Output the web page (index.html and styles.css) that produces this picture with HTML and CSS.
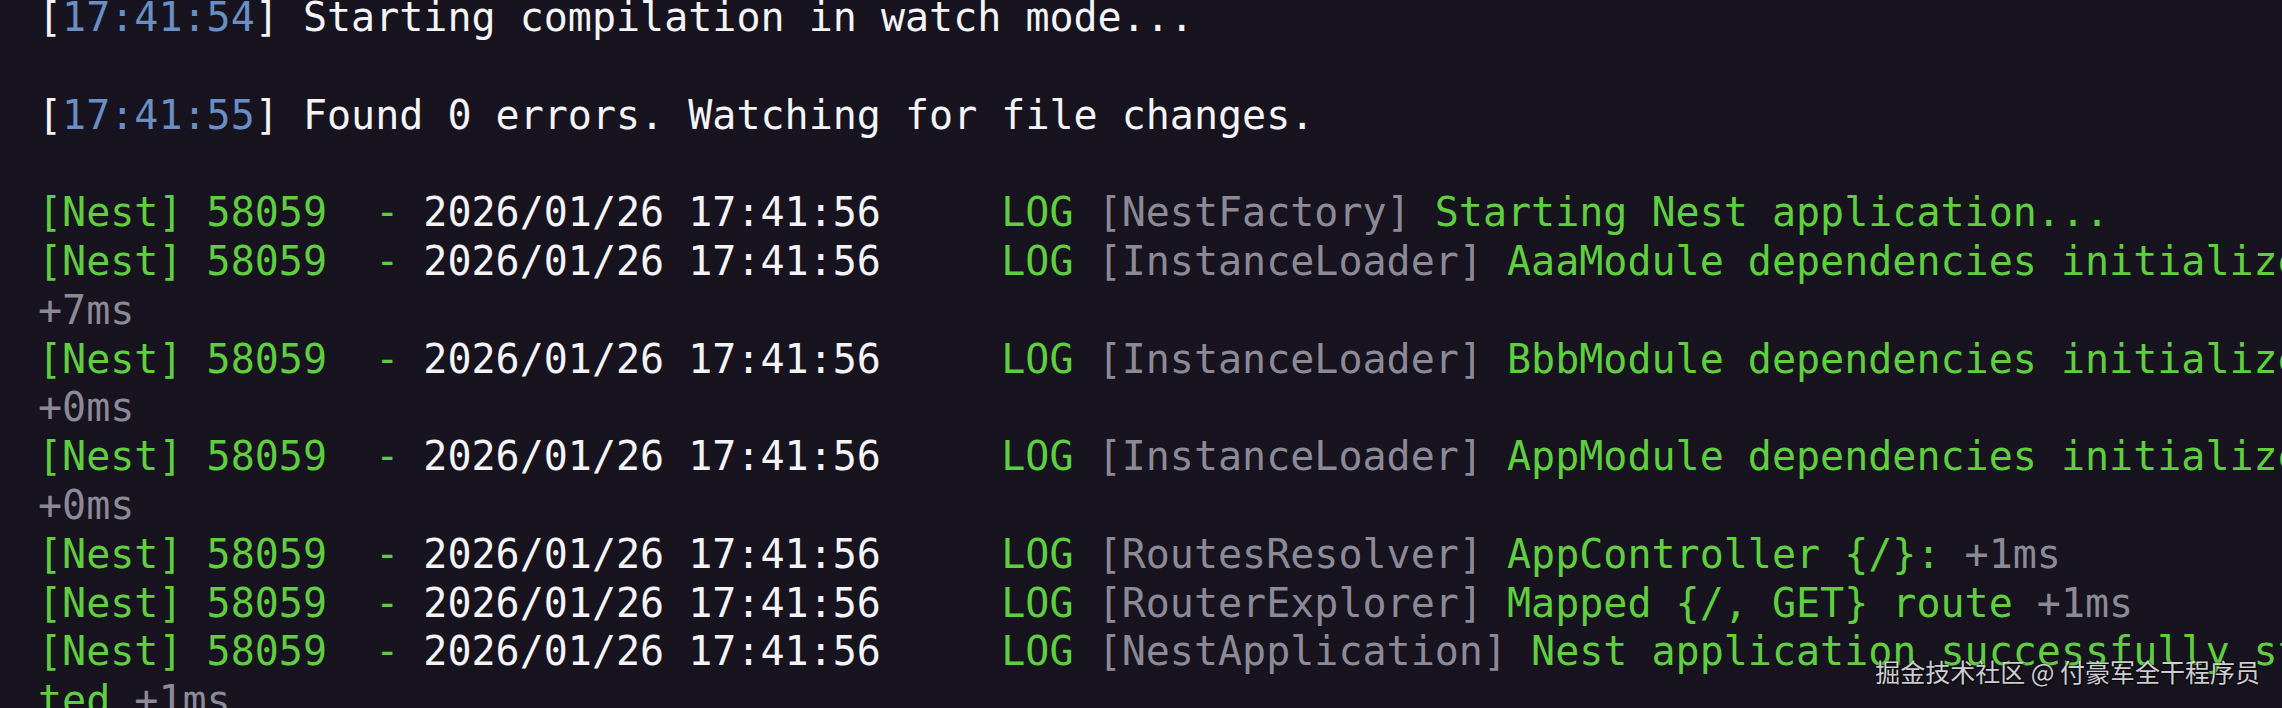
FILE: index.html
```html
<!DOCTYPE html>
<html lang="zh-CN">
<head>
<meta charset="utf-8">
<title>Nest watch mode</title>
<link rel="stylesheet" href="styles.css">
</head>
<body>
<main class="terminal">
<div class="line"><span class="w">[</span><span class="ts">17:41:54</span><span class="w">] Starting compilation in watch mode...</span></div>
<div class="line"> </div>
<div class="line"><span class="w">[</span><span class="ts">17:41:55</span><span class="w">] Found 0 errors. Watching for file changes.</span></div>
<div class="line"> </div>
<div class="line"><span class="g">[Nest] 58059  - </span><span class="w">2026/01/26 17:41:56</span><span class="g">     LOG </span><span class="m">[NestFactory]</span><span class="g"> Starting Nest application...</span></div>
<div class="line"><span class="g">[Nest] 58059  - </span><span class="w">2026/01/26 17:41:56</span><span class="g">     LOG </span><span class="m">[InstanceLoader]</span><span class="g"> AaaModule dependencies initialized</span></div>
<div class="line"><span class="m">+7ms</span></div>
<div class="line"><span class="g">[Nest] 58059  - </span><span class="w">2026/01/26 17:41:56</span><span class="g">     LOG </span><span class="m">[InstanceLoader]</span><span class="g"> BbbModule dependencies initialized</span></div>
<div class="line"><span class="m">+0ms</span></div>
<div class="line"><span class="g">[Nest] 58059  - </span><span class="w">2026/01/26 17:41:56</span><span class="g">     LOG </span><span class="m">[InstanceLoader]</span><span class="g"> AppModule dependencies initialized</span></div>
<div class="line"><span class="m">+0ms</span></div>
<div class="line"><span class="g">[Nest] 58059  - </span><span class="w">2026/01/26 17:41:56</span><span class="g">     LOG </span><span class="m">[RoutesResolver]</span><span class="g"> AppController {/}:</span><span class="m"> +1ms</span></div>
<div class="line"><span class="g">[Nest] 58059  - </span><span class="w">2026/01/26 17:41:56</span><span class="g">     LOG </span><span class="m">[RouterExplorer]</span><span class="g"> Mapped {/, GET} route</span><span class="m"> +1ms</span></div>
<div class="line"><span class="g">[Nest] 58059  - </span><span class="w">2026/01/26 17:41:56</span><span class="g">     LOG </span><span class="m">[NestApplication]</span><span class="g"> Nest application successfully star</span></div>
<div class="line"><span class="g">ted</span><span class="m"> +1ms</span></div>
</main>
<div class="watermark">掘金技术社区 @ 付豪军全干程序员</div>
</body>
</html>
```

FILE: styles.css
```css
html, body {
  margin: 0;
  padding: 0;
  width: 2282px;
  height: 708px;
  overflow: hidden;
  background: #17141f;
}

.terminal {
  margin-top: -7px;
  padding-left: 38px;
  font-family: "DejaVu Sans Mono", "Liberation Mono", monospace;
  font-size: 40px;
  line-height: 48.8px;
  color: #f4f4f6;
}

.line {
  white-space: pre;
  height: 48.8px;
}

.w { color: #f4f4f6; }
.ts { color: #6a8fc4; }
.g { color: #5fcf3f; }
.m { color: #8d8a98; }

.watermark {
  position: absolute;
  right: 22px;
  bottom: 24px;
  font-family: "Noto Sans CJK SC", "Noto Sans", sans-serif;
  font-size: 25px;
  line-height: 1;
  color: rgba(235, 235, 240, 0.88);
  text-shadow: 0 0 2px rgba(0, 0, 0, 0.8), 1px 1px 1px rgba(0, 0, 0, 0.6);
}
```
